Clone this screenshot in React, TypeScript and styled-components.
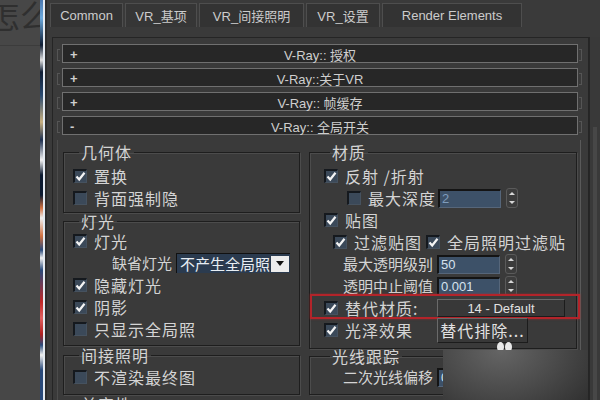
import React from 'react';
import styled, { createGlobalStyle } from 'styled-components';

const GlobalStyle = createGlobalStyle`
  html, body {
    margin: 0;
    padding: 0;
    background: #3b3b3b;
    overflow: hidden;
  }
  body {
    font-family: "Liberation Sans", "Noto Sans CJK SC", sans-serif;
  }
`;

const Page = styled.div`
  display: flex;
  width: 600px;
  height: 400px;
  position: relative;
  overflow: hidden;
  background: #3b3b3b;
  color: #d6d6d6;
`;

const LeftStrip = styled.div`
  width: 40px;
  flex-shrink: 0;
  background: #474747;
`;

const Caption = styled.div`
  height: 45px;
  border-bottom: 1px solid #3c3c3c;
  overflow: hidden;
  font-family: "Noto Sans CJK SC", sans-serif;
  font-size: 32px;
  line-height: 28px;
  color: #2f2f2f;
  white-space: nowrap;
  text-indent: -12px;
`;

const ColorStrip = styled.div`
  width: 3px;
  flex-shrink: 0;
  background: linear-gradient(
    to bottom,
    #4a78b0 0px,
    #6aa8dc 18px,
    #0f1e35 45px,
    #e0e0e0 60px,
    #0f1e35 72px,
    #2a4a70 95px,
    #c8b080 122px,
    #1e3050 140px,
    #f2f2f2 160px,
    #0c1a30 175px,
    #0c1a30 195px,
    #d07040 208px,
    #f0f0f0 218px,
    #d07040 236px,
    #2a4a7a 250px,
    #f0f0f0 258px,
    #2a4a7a 270px,
    #c02828 302px,
    #e06060 318px,
    #b02020 334px,
    #2a4a7a 345px,
    #f0f0f0 355px,
    #2a4a7a 370px,
    #2a4a7a 400px
  );
`;

const WhiteLine = styled.div`
  width: 2px;
  flex-shrink: 0;
  background: #e4eaf1;
`;

const DarkLine = styled.div`
  width: 2px;
  flex-shrink: 0;
  background: #2c2c2c;
`;

const Dialog = styled.div`
  flex: 1;
  display: flex;
  flex-direction: column;
  background: #3a3a3a;
`;

const TabBar = styled.div`
  height: 37px;
  display: flex;
  gap: 2px;
  padding: 3px 0 0 3px;
  box-sizing: border-box;
  align-items: flex-start;
`;

const Tab = styled.div<{ $w: number; $active?: boolean }>`
  width: ${(p) => p.$w}px;
  height: 24px;
  box-sizing: border-box;
  border: 1px solid #4e4e4e;
  border-bottom: none;
  background: ${(p) => (p.$active ? '#363636' : '#333333')};
  color: #cccccc;
  font-size: 13px;
  display: flex;
  align-items: center;
  justify-content: center;
  white-space: nowrap;
`;

const Body = styled.div`
  flex: 1;
  display: flex;
  min-height: 0;
`;

const MainPanel = styled.div`
  margin-left: 5px;
  width: 537px;
  box-sizing: border-box;
  border: 1px solid #252525;
  border-bottom: none;
  background: #3a3a3a;
  padding: 6px 10px 0 9px;
  display: flex;
  flex-direction: column;
  gap: 5px;
`;

const ScrollStrip = styled.div`
  flex: 1;
  background: #393939;
  border-left: 1px solid #262626;
  display: flex;
  justify-content: center;
  padding-top: 90px;
`;

const ScrollTrack = styled.div`
  width: 4px;
  background: #474747;
`;

const RolloutHeader = styled.div`
  position: relative;
  height: 19px;
  box-sizing: border-box;
  border: 1px solid #707070;
  background: #272727;
  display: grid;
  grid-template-columns: 20px 1fr 20px;
  align-items: center;
  font-size: 13px;
  color: #cfcfcf;

  &::before,
  &::after {
    content: '';
    position: absolute;
    top: 4px;
    width: 2px;
    height: 10px;
    border: 1px solid #555;
  }
  &::before {
    left: -6px;
    border-right: none;
  }
  &::after {
    right: -5px;
    border-left: none;
  }
`;

const Sign = styled.span`
  padding-left: 7px;
  font-weight: bold;
  font-size: 13px;
`;

const RolloutTitle = styled.span`
  text-align: center;
  white-space: nowrap;
`;

const RolloutBody = styled.div`
  flex: 1;
  margin: 0 -3px 0 -5px;
  border-left: 1px solid #4c4c4c;
  border-right: 1px solid #5a5a5a;
  padding: 4px 2px 0 5px;
  display: grid;
  grid-template-columns: 237px 268px;
  column-gap: 9px;
  align-content: start;
`;

const Column = styled.div`
  display: flex;
  flex-direction: column;
`;

const Group = styled.fieldset<{ $mt?: number; $pl: number; $pb?: number }>`
  margin: ${(p) => p.$mt ?? 0}px 0 0 0;
  padding: 0 0 ${(p) => p.$pb ?? 6}px ${(p) => p.$pl}px;
  min-width: 0;
  border: 1px solid #1e1e1e;
  box-shadow: inset 1px 1px 0 #4c4c4c, 1px 1px 0 #4c4c4c;
`;

const Legend = styled.legend`
  margin-left: 6px;
  padding: 0 2px;
  font-family: "Noto Sans CJK SC", sans-serif;
  font-size: 16px;
  letter-spacing: 1px;
  line-height: 16px;
  color: #d4d4d4;
`;

const Rows = styled.div<{ $pt: number }>`
  margin-top: ${(p) => p.$pt}px;
  display: flex;
  flex-direction: column;
`;

const Row = styled.div<{ $indent?: number }>`
  position: relative;
  height: 22px;
  display: flex;
  align-items: center;
  padding-left: ${(p) => p.$indent ?? 0}px;
  font-family: "Noto Sans CJK SC", sans-serif;
  font-size: 16px;
  letter-spacing: 1px;
  white-space: nowrap;
`;

const Label = styled.span<{ $w?: number; $small?: boolean }>`
  ${(p) => (p.$w ? `width: ${p.$w}px; flex-shrink: 0;` : '')}
  ${(p) => (p.$small ? 'font-size: 15px; letter-spacing: 0;' : '')}
  line-height: 18px;
  color: #d4d4d4;
`;

const Box = styled.span`
  width: 14px;
  height: 14px;
  flex-shrink: 0;
  box-sizing: border-box;
  background: #3b4959;
  border-top: 2px solid #15191e;
  border-left: 2px solid #15191e;
  border-right: 1px solid #46525f;
  border-bottom: 1px solid #46525f;
  margin-right: 7px;
  display: flex;
  align-items: center;
  justify-content: center;
`;

const NumInput = styled.div<{ $dim?: boolean }>`
  width: 63px;
  height: 19px;
  box-sizing: border-box;
  background: #3d5168;
  border-top: 2px solid #141414;
  border-left: 2px solid #141414;
  border-right: 1px solid #56667a;
  border-bottom: 1px solid #56667a;
  font-family: "Liberation Sans", sans-serif;
  font-size: 13px;
  letter-spacing: 0;
  line-height: 16px;
  padding-left: 2px;
  color: ${(p) => (p.$dim ? '#7f9cbb' : '#d6e2ee')};
`;

const Spinner = styled.div`
  width: 12px;
  height: 20px;
  margin-left: 5px;
  box-sizing: border-box;
  border: 1px solid #5a5a5a;
  border-radius: 3px;
  background: #3c3c3c;
  display: flex;
  flex-direction: column;
  align-items: center;
  justify-content: space-around;
`;

const Tri = styled.span<{ $up?: boolean }>`
  width: 0;
  height: 0;
  border-left: 3px solid transparent;
  border-right: 3px solid transparent;
  ${(p) => (p.$up ? 'border-bottom: 3px solid #d8d8d8;' : 'border-top: 3px solid #d8d8d8;')}
`;

const Dropdown = styled.div`
  width: 114px;
  height: 20px;
  box-sizing: border-box;
  background: #2b3b4f;
  border-top: 1px solid #111;
  border-left: 1px solid #111;
  display: flex;
  align-items: center;
  justify-content: space-between;
  padding-left: 3px;
  font-size: 15px;
  letter-spacing: 0;
  color: #e8eef4;
  overflow: hidden;
`;

const DropArrow = styled.span`
  width: 18px;
  height: 16px;
  margin-right: 1px;
  background: #ececec;
  display: flex;
  align-items: center;
  justify-content: center;
  flex-shrink: 0;
`;

const ArrowTri = styled.span`
  width: 0;
  height: 0;
  border-left: 4px solid transparent;
  border-right: 4px solid transparent;
  border-top: 5px solid #111;
`;

const PlainButton = styled.div<{ $w: number; $h: number; $small?: boolean }>`
  width: ${(p) => p.$w}px;
  height: ${(p) => p.$h}px;
  box-sizing: border-box;
  background: #383838;
  border-top: 1px solid #6a6a6a;
  border-left: 1px solid #6a6a6a;
  border-right: 1px solid #1c1c1c;
  border-bottom: 1px solid #1c1c1c;
  display: flex;
  align-items: center;
  justify-content: center;
  font-family: ${(p) => (p.$small ? '"Liberation Sans", sans-serif' : '"Noto Sans CJK SC", sans-serif')};
  font-size: ${(p) => (p.$small ? 13 : 16)}px;
  letter-spacing: ${(p) => (p.$small ? 0 : 1)}px;
  color: #e2e2e2;
`;

const Highlight = styled.div`
  position: absolute;
  left: -14px;
  right: -4px;
  top: -3px;
  bottom: 0;
  border: 2px solid #b3242a;
  box-shadow: 0 0 2px rgba(200, 40, 40, 0.6);
  pointer-events: none;
`;

const Blob = styled.span<{ $x: number }>`
  position: absolute;
  left: ${(p) => p.$x}px;
  top: 342px;
  width: 7px;
  height: 10px;
  border-radius: 50%;
  background: #e8e8e8;
`;

const Shade = styled.div`
  position: absolute;
  left: 443px;
  top: 350px;
  width: 145px;
  height: 50px;
  background: radial-gradient(ellipse 115px 85px at 40% 0%, #656565 0%, #4a4a4a 50%, #2e2e2e 100%);
`;

const Check: React.FC<{ on?: boolean }> = ({ on }) => (
  <Box>
    {on && (
      <svg width="11" height="11" viewBox="0 0 11 11">
        <path d="M1.5 5.5 L4.2 8.5 L9.5 1.8" stroke="#f4f4f4" strokeWidth="2.2" fill="none" />
      </svg>
    )}
  </Box>
);

const Spin = () => (
  <Spinner>
    <Tri $up />
    <Tri />
  </Spinner>
);

const tabs = [
  { label: 'Common', w: 73 },
  { label: 'VR_基项', w: 72, active: true },
  { label: 'VR_间接照明', w: 105 },
  { label: 'VR_设置', w: 74 },
  { label: 'Render Elements', w: 140 },
];

const rollouts = [
  { sign: '+', title: 'V-Ray:: 授权' },
  { sign: '+', title: 'V-Ray::关于VR' },
  { sign: '+', title: 'V-Ray:: 帧缓存' },
  { sign: '-', title: 'V-Ray:: 全局开关' },
];

export default function App() {
  return (
    <>
      <GlobalStyle />
      <Page>
        <LeftStrip>
          <Caption>怎么</Caption>
        </LeftStrip>
        <ColorStrip />
        <WhiteLine />
        <DarkLine />
        <Dialog>
          <TabBar>
            {tabs.map((t) => (
              <Tab key={t.label} $w={t.w} $active={t.active}>
                {t.label}
              </Tab>
            ))}
          </TabBar>
          <Body>
            <MainPanel>
              {rollouts.map((r) => (
                <RolloutHeader key={r.title}>
                  <Sign>{r.sign}</Sign>
                  <RolloutTitle>{r.title}</RolloutTitle>
                  <span />
                </RolloutHeader>
              ))}
              <RolloutBody>
                <Column>
                  <Group $pl={9} $pb={3}>
                    <Legend>几何体</Legend>
                    <Rows $pt={5}>
                      <Row>
                        <Check on />
                        <Label>置换</Label>
                      </Row>
                      <Row>
                        <Check />
                        <Label>背面强制隐</Label>
                      </Row>
                    </Rows>
                  </Group>
                  <Group $pl={9} $pb={5}>
                    <Legend>灯光</Legend>
                    <Rows $pt={1}>
                      <Row>
                        <Check on />
                        <Label>灯光</Label>
                      </Row>
                      <Row $indent={39}>
                        <Label $small $w={64}>缺省灯光</Label>
                        <Dropdown>
                          不产生全局照
                          <DropArrow>
                            <ArrowTri />
                          </DropArrow>
                        </Dropdown>
                      </Row>
                      <Row>
                        <Check on />
                        <Label>隐藏灯光</Label>
                      </Row>
                      <Row>
                        <Check on />
                        <Label>阴影</Label>
                      </Row>
                      <Row>
                        <Check />
                        <Label>只显示全局照</Label>
                      </Row>
                    </Rows>
                  </Group>
                  <Group $pl={9} $mt={1}>
                    <Legend>间接照明</Legend>
                    <Rows $pt={3}>
                      <Row>
                        <Check />
                        <Label>不渲染最终图</Label>
                      </Row>
                    </Rows>
                  </Group>
                  <Group $pl={9} $mt={1}>
                    <Legend>兼容性</Legend>
                    <Rows $pt={3}>
                      <Row />
                    </Rows>
                  </Group>
                </Column>
                <Column>
                  <Group $pl={14} $pb={7}>
                    <Legend>材质</Legend>
                    <Rows $pt={5}>
                      <Row>
                        <Check on />
                        <Label>反射 /折射</Label>
                      </Row>
                      <Row $indent={23}>
                        <Check />
                        <Label $w={70}>最大深度</Label>
                        <NumInput $dim>2</NumInput>
                        <Spin />
                      </Row>
                      <Row>
                        <Check on />
                        <Label>贴图</Label>
                      </Row>
                      <Row $indent={9}>
                        <Check on />
                        <Label $w={72}>过滤贴图</Label>
                        <Check on />
                        <Label>全局照明过滤贴</Label>
                      </Row>
                      <Row $indent={19}>
                        <Label $small $w={94}>最大透明级别</Label>
                        <NumInput>50</NumInput>
                        <Spin />
                      </Row>
                      <Row $indent={19}>
                        <Label $small $w={94}>透明中止阈值</Label>
                        <NumInput>0.001</NumInput>
                        <Spin />
                      </Row>
                      <Row>
                        <Check on />
                        <Label $w={92}>替代材质:</Label>
                        <PlainButton $w={128} $h={18} $small>
                          14 - Default
                        </PlainButton>
                        <Highlight />
                      </Row>
                      <Row>
                        <Check on />
                        <Label $w={92}>光泽效果</Label>
                        <PlainButton $w={91} $h={25}>
                          替代排除...
                        </PlainButton>
                      </Row>
                    </Rows>
                  </Group>
                  <Group $pl={14} $mt={-1}>
                    <Legend>光线跟踪</Legend>
                    <Rows $pt={2}>
                      <Row $indent={19}>
                        <Label $small $w={94}>二次光线偏移</Label>
                        <NumInput>0.0</NumInput>
                      </Row>
                    </Rows>
                  </Group>
                </Column>
              </RolloutBody>
            </MainPanel>
            <ScrollStrip>
              <ScrollTrack />
            </ScrollStrip>
          </Body>
        </Dialog>
        <Blob $x={497} />
        <Blob $x={505} />
        <Shade />
      </Page>
    </>
  );
}
